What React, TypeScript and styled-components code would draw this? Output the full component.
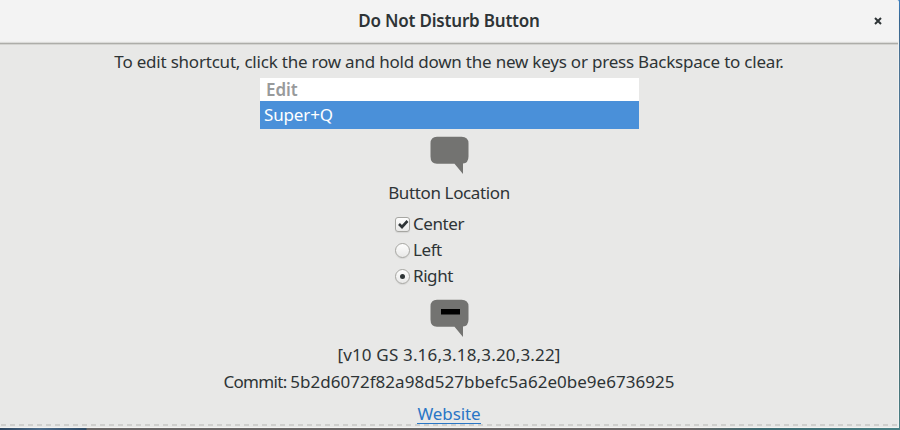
import React from "react";
import styled, { createGlobalStyle } from "styled-components";

const Global = createGlobalStyle`
  * { box-sizing: border-box; }
  html, body { margin: 0; padding: 0; background: #e8e8e7; }
`;

const Desktop = styled.div`
  width: 900px;
  height: 430px;
  padding: 0 1px 2px 0;
  overflow: hidden;
  background:
    linear-gradient(90deg, #2c4560 0, #4d6c8b 40px, #2e4a66 86px, #6b6868 87px, #6b6868 690px, #3d6a72 760px, #4a8085 100%)
      0 100% / 100% 2px no-repeat,
    linear-gradient(#3d7fc0 0, #35648f 20px, #4d7393 60px, #597e9b 265px, #45565f 275px, #4a8085 100%);
`;

const Window = styled.div`
  display: flex;
  flex-direction: column;
  height: 428px;
  border-right: 1px solid #f1f1f0;
  border-bottom: 1px solid #f3f3f2;
  border-top-right-radius: 2px;
  background: #e8e8e7;
  color: #2e3436;
  font-family: "Noto Sans", "Open Sans", sans-serif;
  font-size: 17px;
  overflow: hidden;
`;

const HeaderBar = styled.header`
  display: grid;
  grid-template-columns: 40px 1fr 40px;
  align-items: center;
  flex: none;
  height: 45px;
  padding-bottom: 4px;
  background: linear-gradient(#f3f3f3 41px, #ececeb 42px, #c9c9c6 43px, #adada9 43px, #adada9 44px, #d3d3d0 44px);
`;

const Title = styled.h1`
  grid-column: 2;
  margin: 0;
  text-align: center;
  font-size: 17px;
  line-height: 24px;
  font-weight: 600;
  letter-spacing: -0.2px;
`;

const CloseButton = styled.button`
  display: flex;
  padding: 0;
  border: 0;
  background: none;
  margin-left: 16px;
`;

const Content = styled.main`
  display: flex;
  flex-direction: column;
  align-items: center;
  flex: 1;
  padding-top: 5px;
`;

const Line = styled.div<{ $track: number; $top?: number }>`
  height: 24px;
  line-height: 24px;
  margin-top: ${(p) => p.$top ?? 0}px;
  white-space: nowrap;
  letter-spacing: ${(p) => p.$track}px;
`;

const CommitLabel = styled.span`
  letter-spacing: -0.7px;
`;

const ShortcutTable = styled.div`
  width: 379px;
  margin: 4px 0 7px 1px;
`;

const ColumnHead = styled.div`
  height: 23px;
  padding-left: 6px;
  line-height: 23px;
  background: #fff;
  color: #989a9b;
  font-weight: 600;
  letter-spacing: -0.1px;
`;

const ShortcutRow = styled.div`
  height: 28px;
  padding-left: 4px;
  line-height: 28px;
  background: #4a90d9;
  color: #fff;
  letter-spacing: -0.15px;
`;

const Options = styled.div`
  display: flex;
  flex-direction: column;
  width: 108px;
  margin: 6px 0 9px;
`;

const Option = styled.label`
  display: flex;
  align-items: center;
  gap: 3px;
  height: 26.2px;
  line-height: 26px;
  letter-spacing: -0.42px;
`;

const Indicator = styled.span<{ $round?: boolean }>`
  display: flex;
  align-items: center;
  justify-content: center;
  width: 15px;
  height: 15px;
  border: 1px solid #a6a6a2;
  border-radius: ${(p) => (p.$round ? "50%" : "3px")};
  background: linear-gradient(#fdfdfd, #e9e9e8);
  box-shadow: 0 1px 1px rgba(0, 0, 0, 0.08);
`;

const Dot = styled.span`
  width: 5px;
  height: 5px;
  border-radius: 50%;
  background: #2e3436;
`;

const Website = styled.a`
  height: 22px;
  margin-top: 8px;
  line-height: 23px;
  color: #2a76c6;
  border-bottom: 1px solid #2a76c6;
  letter-spacing: -0.1px;
`;

const DashedEdge = styled.div`
  flex: none;
  height: 2px;
  margin-bottom: 1px;
  background: repeating-linear-gradient(90deg, transparent 0 1px, #cfcfcd 1px 6px, transparent 6px 9px);
`;

const BubbleIcon = styled.svg`
  display: block;
  flex: none;
  width: 39px;
  height: 38px;
  margin-left: 1px;
`;

function Bubble({ busy = false }: { busy?: boolean }) {
  return (
    <BubbleIcon viewBox="0 0 39 38" aria-hidden="true">
      <path d="M7 .7H31.5Q38.5 .7 38.5 7.5V20.5Q38.5 27 33 27.6V38L24.5 27.8H7Q.5 27.8 .5 20.5V7.5Q.5 .7 7 .7Z" fill="#737371" />
      {busy && <rect x="11" y="10" width="19" height="5.5" fill="#000" />}
    </BubbleIcon>
  );
}

export default function App() {
  return (
    <Desktop>
      <Global />
      <Window>
        <HeaderBar>
          <Title>Do Not Disturb Button</Title>
          <CloseButton aria-label="Close">
            <svg width="8" height="8" viewBox="0 0 8 8">
              <path d="M1 1L7 7M7 1L1 7" stroke="#2e3436" strokeWidth="2" />
            </svg>
          </CloseButton>
        </HeaderBar>
        <Content>
          <Line $track={-0.21}>To edit shortcut, click the row and hold down the new keys or press Backspace to clear.</Line>
          <ShortcutTable>
            <ColumnHead>Edit</ColumnHead>
            <ShortcutRow>Super+Q</ShortcutRow>
          </ShortcutTable>
          <Bubble />
          <Line $track={-0.37} $top={7}>Button Location</Line>
          <Options>
            <Option>
              <Indicator>
                <svg width="13" height="13" viewBox="0 0 13 13">
                  <path d="M3 6L6 9L11.5 3" fill="none" stroke="#2e3436" strokeWidth="2.6" />
                </svg>
              </Indicator>
              Center
            </Option>
            <Option>
              <Indicator $round />
              Left
            </Option>
            <Option>
              <Indicator $round>
                <Dot />
              </Indicator>
              Right
            </Option>
          </Options>
          <Bubble busy />
          <Line $track={0.17} $top={6}>[v10 GS 3.16,3.18,3.20,3.22]</Line>
          <Line $track={0.03} $top={3}>
            <CommitLabel>Commit: </CommitLabel>5b2d6072f82a98d527bbefc5a62e0be9e6736925
          </Line>
          <Website>Website</Website>
        </Content>
        <DashedEdge />
      </Window>
    </Desktop>
  );
}
